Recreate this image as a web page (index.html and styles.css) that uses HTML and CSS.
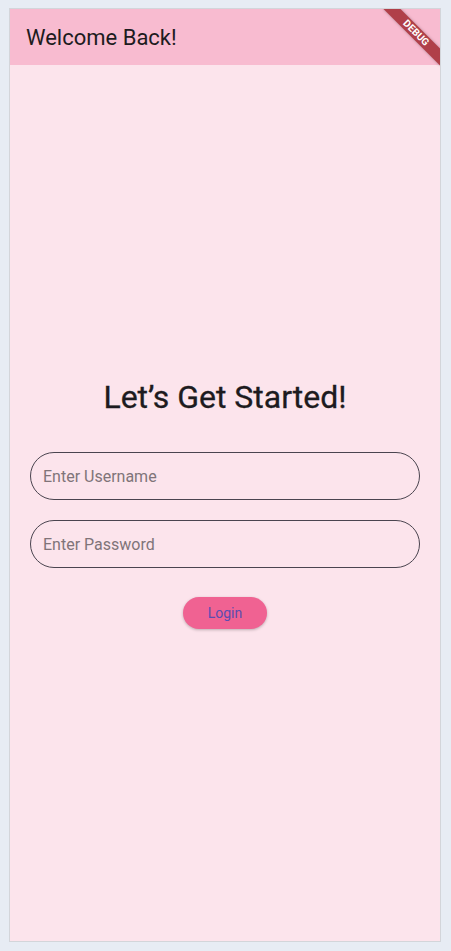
FILE: index.html
```html
<!DOCTYPE html>
<html>
<head>
<meta charset="utf-8">
<link rel="stylesheet" href="styles.css">
</head>
<body>
<div class="device">
  <header class="appbar">
    <h1 class="appbar-title">Welcome Back!</h1>
  </header>
  <main class="content">
    <div class="form">
      <h2 class="heading">Let’s Get Started!</h2>
      <div class="field"><input class="input" type="text" placeholder="Enter Username"></div>
      <div class="field"><input class="input" type="password" placeholder="Enter Password"></div>
      <button class="login">Login</button>
    </div>
  </main>
  <div class="debug-banner">DEBUG</div>
</div>
</body>
</html>
```

FILE: styles.css
```css
html, body {
  margin: 0;
  padding: 0;
}
body {
  background: #e7ecf4;
  font-family: Roboto, "Noto Sans", sans-serif;
  width: 451px;
  height: 951px;
  overflow: hidden;
}
.device {
  position: relative;
  margin: 8px 0 0 9px;
  width: 430px;
  height: 932px;
  border: 1px solid #d3d5da;
  background: #fce4ec;
  overflow: hidden;
  display: flex;
  flex-direction: column;
}
.appbar {
  height: 56px;
  flex: 0 0 56px;
  background: #f8bbd0;
  display: flex;
  align-items: center;
  padding-left: 16px;
}
.appbar-title {
  margin: 0;
  font-size: 22px;
  font-weight: 400;
  color: #1d1b20;
}
.content {
  flex: 1;
  display: flex;
  align-items: center;
  justify-content: center;
  padding: 0 20px;
}
.form {
  width: 100%;
  display: flex;
  flex-direction: column;
  align-items: center;
}
.heading {
  margin: 0 0 35px;
  font-size: 32px;
  font-weight: 400;
  color: #1d1b20;
  line-height: 40px;
  -webkit-text-stroke: 0.3px #1d1b20;
}
.field {
  width: 100%;
  margin-bottom: 20px;
}
.input {
  box-sizing: border-box;
  width: 100%;
  height: 48px;
  border: 1px solid #4a444f;
  border-radius: 24px;
  background: transparent;
  padding: 0 12px;
  font-family: Roboto, sans-serif;
  font-size: 16px;
  color: #1d1b20;
  outline: none;
}
.input::placeholder {
  color: #807479;
}
.login {
  margin-top: 9px;
  width: 84px;
  height: 32px;
  border: none;
  border-radius: 16px;
  background: #f06292;
  color: #5b4db0;
  font-family: Roboto, sans-serif;
  font-size: 14px;
  font-weight: 400;
  box-shadow: 0 1px 3px rgba(0,0,0,0.25);
  padding: 0;
}
.debug-banner {
  position: absolute;
  left: 366px;
  top: 18px;
  width: 80px;
  height: 12px;
  line-height: 12px;
  transform: rotate(45deg);
  background: #b03f49;
  color: #fff;
  font-family: Roboto, sans-serif;
  font-size: 10px;
  font-weight: 700;
  text-align: center;
  box-shadow: 0 0 3px rgba(0,0,0,0.3);
}
```
